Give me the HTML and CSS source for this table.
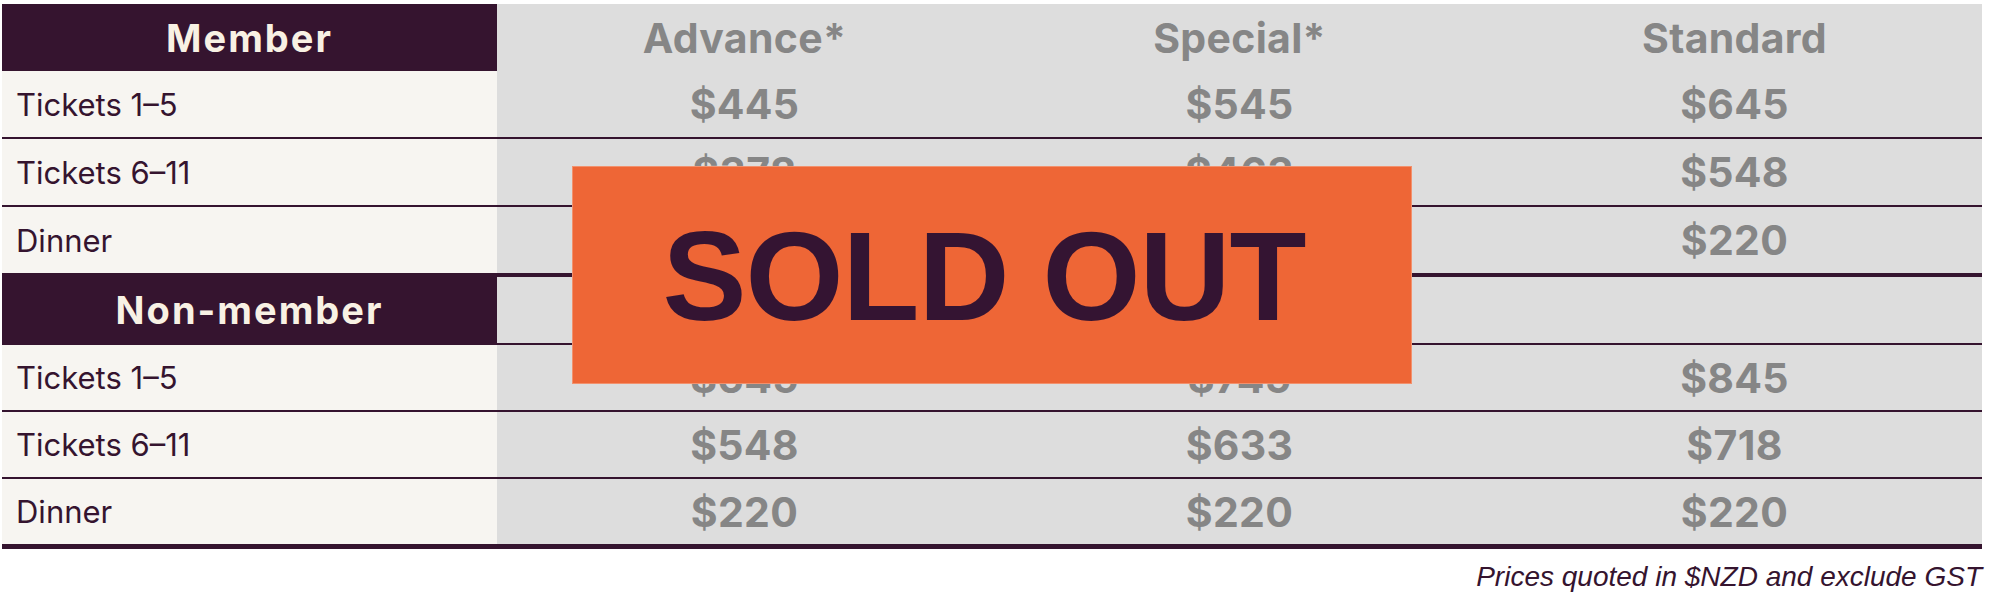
FILE: index.html
```html
<!DOCTYPE html>
<html lang="en">
<head>
<meta charset="utf-8">
<title>Ticket pricing</title>
<link rel="stylesheet" href="styles.css">
</head>
<body>
<div class="page">
  <div class="pricing">
    <div class="table">
      <div class="row row-head">
        <div class="cell label group">Member</div>
        <div class="cell col">Advance*</div>
        <div class="cell col">Special*</div>
        <div class="cell col">Standard</div>
      </div>
      <div class="row">
        <div class="cell label">Tickets 1–5</div>
        <div class="cell price">$445</div>
        <div class="cell price">$545</div>
        <div class="cell price">$645</div>
      </div>
      <div class="row">
        <div class="cell label">Tickets 6–11</div>
        <div class="cell price">$378</div>
        <div class="cell price">$463</div>
        <div class="cell price">$548</div>
      </div>
      <div class="row row-end">
        <div class="cell label">Dinner</div>
        <div class="cell price">$220</div>
        <div class="cell price">$220</div>
        <div class="cell price">$220</div>
      </div>
      <div class="row row-head row-lined">
        <div class="cell label group">Non-member</div>
        <div class="cell col"></div>
        <div class="cell col"></div>
        <div class="cell col"></div>
      </div>
      <div class="row row-tight">
        <div class="cell label">Tickets 1–5</div>
        <div class="cell price">$645</div>
        <div class="cell price">$745</div>
        <div class="cell price">$845</div>
      </div>
      <div class="row row-tight">
        <div class="cell label">Tickets 6–11</div>
        <div class="cell price">$548</div>
        <div class="cell price">$633</div>
        <div class="cell price">$718</div>
      </div>
      <div class="row row-tight row-last">
        <div class="cell label">Dinner</div>
        <div class="cell price">$220</div>
        <div class="cell price">$220</div>
        <div class="cell price">$220</div>
      </div>
    </div>
    <div class="sold"><span class="sold-text">SOLD OUT</span></div>
    <p class="note">Prices quoted in $NZD and exclude GST</p>
  </div>
</div>
</body>
</html>
```

FILE: styles.css
```css
html, body {
  margin: 0;
  padding: 0;
  background: #ffffff;
}

.page {
  padding: 4px 0 0 2px;
}

.pricing {
  position: relative;
  width: 1980px;
}

.table {
  display: flex;
  flex-direction: column;
}

.row {
  display: grid;
  grid-template-columns: repeat(4, 495px);
  height: 66px;
  border-bottom: 2px solid #35142f;
}

.row-head {
  height: 67px;
  border-bottom: 0;
}

.row-lined {
  height: 66px;
  border-bottom: 2px solid #35142f;
}

.row-end {
  border-bottom-width: 4px;
}

.row-tight {
  height: 65px;
}

.row-last {
  border-bottom-width: 5px;
}

.cell {
  display: flex;
  align-items: center;
  justify-content: center;
  background: #dddddd;
  color: #868686;
  font-family: "Inter", "Noto Sans", sans-serif;
  font-weight: 700;
  font-size: 41px;
  letter-spacing: 0.3px;
}

.label {
  justify-content: flex-start;
  padding-left: 14px;
  background: #f7f5f1;
  color: #35142f;
  font-weight: 400;
  font-size: 31px;
  letter-spacing: 0;
}

.group {
  justify-content: center;
  padding-left: 0;
  background: #35142f;
  color: #f8f1e4;
  font-weight: 700;
  font-size: 38px;
  letter-spacing: 2px;
}

.sold {
  position: absolute;
  left: 570px;
  top: 162px;
  width: 838px;
  height: 216px;
  display: flex;
  align-items: center;
  justify-content: center;
  background: #ee6636;
  border: 1px solid #f2916d;
}

.sold-text {
  font-family: "Liberation Sans", Arial, sans-serif;
  font-weight: 700;
  font-size: 126px;
  line-height: 1;
  letter-spacing: -1px;
  color: #341432;
  margin-left: -16px;
  padding-top: 3px;
}

.note {
  margin: 12px 0 0;
  text-align: right;
  font-family: "Liberation Sans", Arial, sans-serif;
  font-style: italic;
  font-size: 28px;
  color: #35142f;
}
```
